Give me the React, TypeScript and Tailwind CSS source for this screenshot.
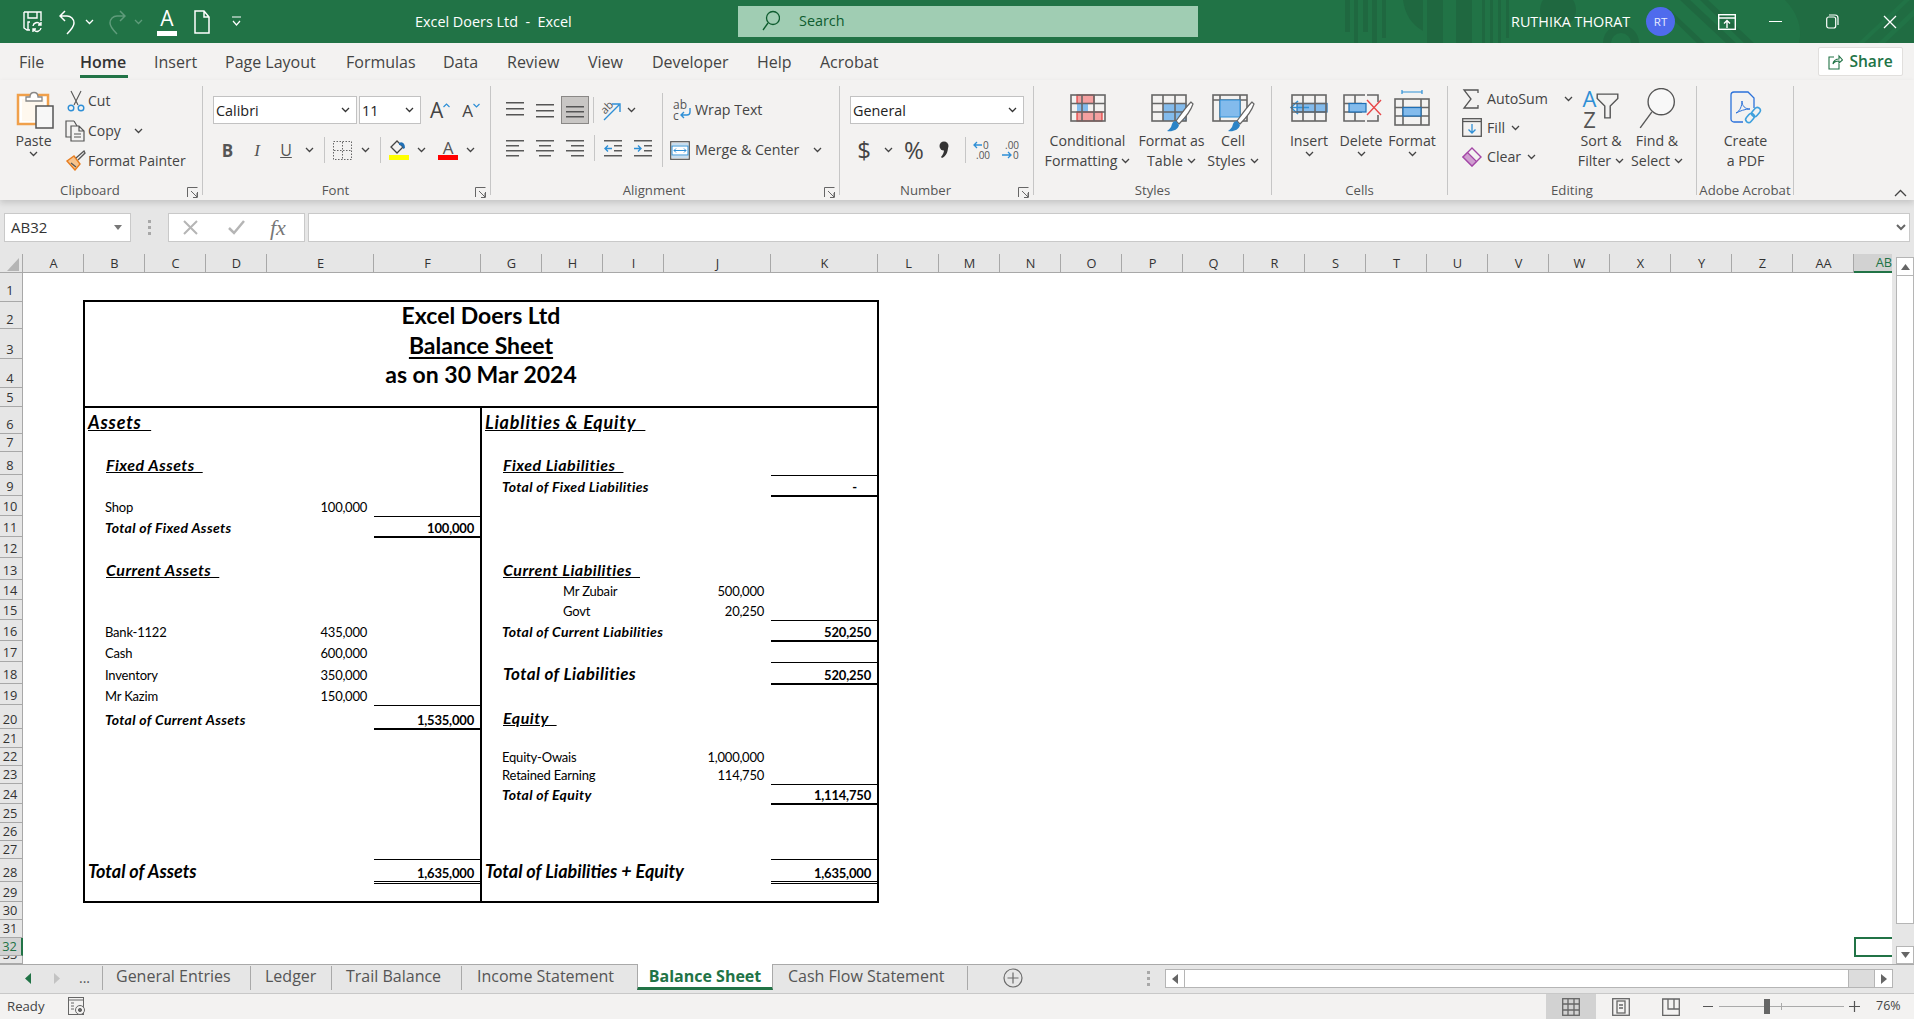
import React from "react";

const ui = "font-['Open_Sans','Noto_Sans',sans-serif]";
const sheetFont = "font-['Lato','Liberation_Sans',sans-serif]";

const Chev = ({ c = "#444" }: { c?: string }) => (
  <svg width="9" height="6" viewBox="0 0 9 6" className="shrink-0"><path d="M1 1l3.5 3.5L8 1" fill="none" stroke={c} strokeWidth="1.3" /></svg>
);
const Launcher = () => (
  <svg width="11" height="11" viewBox="0 0 11 11"><path d="M.5 10V.5H10.5M4 4l6 6M10 6v4.5H6M10.5 5v5.5" fill="none" stroke="#666" strokeWidth="1" /></svg>
);
const Lines = ({ w = [18, 18, 18], y = [1, 7, 13], c = "#555" }: { w?: number[]; y?: number[]; c?: string }) => (
  <svg width="18" height="16" viewBox="0 0 18 16">
    {w.map((x, i) => <rect key={i} x={(18 - x) / 2} y={y[i]} width={x} height="1.5" fill={c} />)}
  </svg>
);
const Grid = ({ children, w = 36, h = 28 }: { children?: React.ReactNode; w?: number; h?: number }) => (
  <svg width={w} height={h + 6} viewBox={`0 0 ${w} ${h + 6}`} className="overflow-visible translate-y-[2px]">
    {children}
    <g fill="none" stroke="#666" strokeWidth="1.6">
      <rect x="1" y="1" width="34" height="26" />
      <path d="M12 1v26M24 1v26M1 9.5h34M1 18h34" />
    </g>
  </svg>
);

function Brush() {
  return (
    <g>
      <path d="M40 8C36 12 30 20 25 27l3 3c6-6 12-14 14-20z" fill="#fff" stroke="#666" strokeWidth="1.2" />
      <path d="M16 37c5 1 11-1 12-6l-3-4c-4 0-4 4-5 6-1 1-2 3-4 4z" fill="#2b83c6" />
    </g>
  );
}

const BigBtn = ({ w, icon, l1, l2, down = false }: { w: string; icon: React.ReactNode; l1: string; l2?: string; down?: boolean }) => (
  <div className={`${w} flex flex-col items-center shrink-0 whitespace-nowrap text-[14.2px] leading-[20px] text-[#444]`}>
    <div className="h-[45px] flex items-center justify-center">{icon}</div>
    <div>{l1}</div>
    <div className="flex items-center gap-[4px]">
      {l2 && <span>{l2}</span>}
      {down && <Chev />}
    </div>
  </div>
);

const Group = ({ w, label, launcher = false, children }: { w: string; label: string; launcher?: boolean; children: React.ReactNode }) => (
  <div className={`${w} h-[109px] mt-[6px] shrink-0 relative flex flex-col border-r border-[#c6c6c6]`}>
    <div className="h-[89px] flex">{children}</div>
    <div className={`h-[20px] translate-y-[5px] text-center text-[13.2px] leading-[20px] text-[#555] whitespace-nowrap ${launcher ? "pr-[22px]" : ""}`}>{label}</div>
    {launcher && <div className="absolute right-[4px] bottom-[-3px]"><Launcher /></div>}
  </div>
);

const Box = ({ w, c, children }: { w: string; c?: string; children: React.ReactNode }) => (
  <div className={`${w} ${c ?? ""} shrink-0 flex items-center justify-center`}>{children}</div>
);

const Select = ({ w, text }: { w: string; text: string }) => (
  <div className={`${w} h-[28px] bg-white border border-[#c2c2c2] flex items-center justify-between pl-[2px] pr-[6px] text-[14.4px] text-[#222]`}>
    <span className="translate-y-[1px]">{text}</span><Chev c="#333" />
  </div>
);

function TitleBar() {
  return (
    <div className="h-[43px] shrink-0 bg-[#217346] relative flex items-center text-white overflow-hidden">
      <svg className="absolute inset-0" width="1914" height="43" viewBox="0 0 1914 43">
        <g fill="#1f6840">
          <rect x="1345" y="0" width="5" height="32" />
          <rect x="1354" y="0" width="4" height="43" />
          <rect x="1363" y="0" width="5" height="32" />
          <rect x="1372" y="0" width="5" height="43" />
          <rect x="1382" y="0" width="4" height="38" />
          <path d="M1403 0c2 14 8 24 20 31V0z" />
          <rect x="1427" y="0" width="16" height="43" />
          <rect x="1456" y="0" width="16" height="43" />
          <rect x="1482" y="0" width="3" height="43" /><rect x="1490" y="0" width="3" height="43" /><rect x="1498" y="0" width="3" height="43" /><rect x="1506" y="0" width="3" height="38" />
          <circle cx="1558" cy="10" r="18" />
          <path d="M1603 43a18 18 0 0 1 36 0h-8a10 10 0 0 0-20 0z" />
          <path d="M1680 0h10l46 43h-10zM1700 0h8l46 43h-10zM1668 8l37 35h-8l-29-28z" />
          <path d="M1785 0c12 12 18 28 14 43h115V0z" opacity=".6" />
          <path d="M1858 43l46-43h6l-46 43zM1878 43l36-34v7l-29 27z" fill="#217346" />
        </g>
      </svg>
      <div className="relative w-[738px] shrink-0 flex items-center pl-[23px]">
        <svg width="20" height="24" viewBox="0 0 20 24" fill="none" stroke="#fff" strokeWidth="1.4"><path d="M1 2h17v9M1 2v16l3 2h3M5 2v6h9V2M7 12H5v8" /><path d="M10 16a4 4 0 0 1 7-2l1 1M18 12v3h-3M18 18a4 4 0 0 1-7 2l-1-1M10 22v-3h3" /></svg>
        <svg className="ml-[16px]" width="17" height="26" viewBox="0 0 17 26" fill="none" stroke="#fff" strokeWidth="1.5"><path d="M6 2L1 7l5 5M1 7h7a7 7 0 0 1 7 7c0 4-3 7-7 11" /></svg>
        <div className="ml-[9px]"><Chev c="#fff" /></div>
        <svg className="ml-[14px]" width="18" height="26" viewBox="0 0 18 26" fill="none" stroke="#5f9c7b" strokeWidth="1.5"><path d="M12 2l5 5-5 5M17 7h-8a7 7 0 0 0-7 7c0 4 3 7 7 11" /></svg>
        <div className="ml-[8px]"><Chev c="#5f9c7b" /></div>
        <div className="ml-[14px] w-[20px] flex flex-col items-center">
          <span className="text-[21px] leading-[22px] font-['Open_Sans']">A</span>
          <div className="w-[20px] h-[5px] bg-white mt-[2px]" />
        </div>
        <svg className="ml-[17px]" width="16" height="24" viewBox="0 0 16 24" fill="none" stroke="#fff" strokeWidth="1.5"><path d="M1 1h9l5 6v16H1zM10 1v6h5" /></svg>
        <svg className="ml-[22px]" width="9" height="11" viewBox="0 0 9 11" fill="none" stroke="#fff" strokeWidth="1.2"><path d="M0 1h9M1 5l3.5 4L8 5" /></svg>
        <span className="ml-[174px] text-[14.4px] whitespace-pre">Excel Doers Ltd  -  Excel</span>
      </div>
      <div className="relative w-[460px] h-[31px] -mt-[1px] bg-[#a0cdb3] flex items-center shrink-0">
        <svg className="ml-[24px]" width="18" height="22" viewBox="0 0 18 22" fill="none" stroke="#0e5c2f" strokeWidth="1.3"><circle cx="11" cy="8" r="6.5" /><path d="M6 13l-5 7" /></svg>
        <span className="ml-[19px] text-[14.4px] text-[#0e5c2f]">Search</span>
      </div>
      <span className="relative ml-[313px] w-[121px] text-[14.4px] whitespace-nowrap shrink-0">RUTHIKA THORAT</span>
      <div className="relative ml-[14px] w-[29px] h-[29px] rounded-full bg-[#4f6bed] flex items-center justify-center text-[11.5px] text-[#e8ecff] shrink-0">RT</div>
      <svg className="relative ml-[43px] shrink-0" width="18" height="16" viewBox="0 0 18 16" fill="none" stroke="#fff" strokeWidth="1.4"><rect x=".7" y=".7" width="16.6" height="14.6" /><path d="M1 4h16M9 14V7M6 9.5L9 6.5l3 3" /></svg>
      <div className="relative ml-[33px] w-[13px] h-[1.5px] bg-white shrink-0" />
      <svg className="relative ml-[44px] shrink-0" width="13" height="15" viewBox="0 0 13 15" fill="none" stroke="#fff" strokeWidth="1.2"><rect x=".7" y="3" width="9" height="11" rx="2" /><path d="M3 1h6a3 3 0 0 1 3 3v7" /></svg>
      <svg className="relative ml-[44px] shrink-0" width="14" height="14" viewBox="0 0 14 14" stroke="#fff" strokeWidth="1.3"><path d="M1 1l12 12M13 1L1 13" /></svg>
    </div>
  );
}

const tabs = [
  ["File", "w-[61px] text-[#444]"], ["Home", "w-[74px] font-semibold text-[#333]"], ["Insert", "w-[71px] text-[#444]"], ["Page Layout", "w-[121px] text-[#444]"],
  ["Formulas", "w-[97px] text-[#444]"], ["Data", "w-[64px] text-[#444]"], ["Review", "w-[81px] text-[#444]"], ["View", "w-[64px] text-[#444]"],
  ["Developer", "w-[105px] text-[#444]"], ["Help", "w-[63px] text-[#444]"], ["Acrobat", "w-[80px] text-[#444]"],
];

function TabRow() {
  return (
    <div className="h-[37px] shrink-0 bg-[#f3f2f1] flex items-center pl-[19px] text-[16px]">
      {tabs.map(([t, c]) => (
        <div key={t} className={`${c} h-full flex items-center relative shrink-0 pt-[1px]`}>
          {t}
          {t === "Home" && <div className="absolute left-0 w-[48px] bottom-[2px] h-[3px] bg-[#217346]" />}
        </div>
      ))}
      <div className="ml-auto mr-[11px] w-[85px] h-[29px] bg-white border border-[#e1dfdd] rounded-[2px] flex items-center justify-center gap-[6px] text-[#217346] font-semibold text-[15.6px]">
        <svg width="15" height="16" viewBox="0 0 15 16" fill="none" stroke="#217346" strokeWidth="1.1"><path d="M6 3H1v12h10v-5M5 10c0-3 3-5 6-5V2l3.5 4L11 9V7c-3 0-5 1-6 3z" /></svg>
        Share
      </div>
    </div>
  );
}

function Ribbon() {
  return (
    <div className="h-[120px] shrink-0 bg-[#f3f2f1] flex relative z-10 shadow-[0_3px_6px_rgba(0,0,0,0.14)]">
      <Group w="w-[203px]" label="Clipboard" launcher>
        <div className="w-[63px] shrink-0 pl-[2px]">
          <BigBtn w="w-[63px]" l1="Paste" down icon={
            <svg className="translate-x-[3px]" width="42" height="40" viewBox="0 0 42 40">
              <rect x="2" y="6" width="30" height="29" fill="#fff" stroke="#f0a04b" strokeWidth="2.5" />
              <rect x="6" y="10" width="22" height="22" fill="#fff8ee" />
              <path d="M10 8h4c0-6 8-6 8 0h4v4H10z" fill="#fff" stroke="#888" strokeWidth="1.3" />
              <rect x="20" y="17" width="17" height="22" fill="#f7f7f7" stroke="#555" strokeWidth="1.5" />
            </svg>} />
        </div>
        <div className="flex flex-col text-[14px] text-[#444]">
          {[
            ["Cut", <svg key="c" width="18" height="22" viewBox="0 0 18 22" fill="none" stroke="#555" strokeWidth="1.1"><path d="M4 1l7 14M14 1L7 15" /><circle cx="4" cy="18" r="2.8" stroke="#2e8fd6" strokeWidth="1.4" /><circle cx="14" cy="18" r="2.8" stroke="#2e8fd6" strokeWidth="1.4" /></svg>],
            ["Copy", <svg key="p" width="21" height="22" viewBox="0 0 21 22" fill="none" stroke="#555" strokeWidth="1.2"><path d="M9 1H1v16h5M9 1l3 5" /><path d="M6 6h8l5 5v10H6zM14 6v5h5M9 14h7M9 17h7" /></svg>],
            ["Format Painter", <svg key="f" width="20" height="21" viewBox="0 0 20 21" fill="none"><path d="M1 11l7-5 6 8-5 6z" fill="#f7c38c" stroke="#e87d1e" strokeWidth="1.4" /><path d="M5 13l5 4M10 8l8-7 1 2-7 7" stroke="#555" strokeWidth="1.3" /></svg>],
          ].map(([t, ic], i) => (
            <div key={i} className="h-[30px] flex items-center whitespace-nowrap">
              <div className="w-[25px] shrink-0 flex justify-center">{ic}</div>
              <span>{t}</span>
              {t === "Copy" && <span className="ml-[13px]"><Chev /></span>}
            </div>
          ))}
        </div>
      </Group>

      <Group w="w-[288px]" label="Font" launcher>
        <div className="flex flex-col pl-[10px] pt-[10px]">
          <div className="flex items-center gap-[2px] h-[28px]">
            <Select w="w-[144px]" text="Calibri" />
            <Select w="w-[62px]" text="11" />
            <div className="flex items-center ml-[7px] text-[#444]">
              <span className="text-[21px] leading-none">A</span>
              <svg className="mb-[10px]" width="7" height="5" viewBox="0 0 7 5" fill="none" stroke="#2e8fd6" strokeWidth="1.2"><path d="M.5 4L3.5 1l3 3" /></svg>
              <span className="text-[17px] leading-none ml-[12px]">A</span>
              <svg className="mb-[10px]" width="7" height="5" viewBox="0 0 7 5" fill="none" stroke="#2e8fd6" strokeWidth="1.2"><path d="M.5 1l3 3 3-3" /></svg>
            </div>
          </div>
          <div className="flex items-center h-[30px] mt-[11px] -ml-[10px] pl-[10px] text-[#555]">
            <Box w="w-[29px]"><span className="font-bold text-[17px] leading-none">B</span></Box>
            <Box w="w-[30px]"><span className="italic text-[17px] leading-none font-['Liberation_Serif']">I</span></Box>
            <Box w="w-[28px]"><span className="underline text-[16px] leading-none">U</span></Box>
            <Box w="w-[18px]"><Chev /></Box>
            <Box w="w-[12px]"><div className="w-px h-[26px] bg-[#c6c6c6]" /></Box>
            <Box w="w-[24px]"><svg width="19" height="19" viewBox="0 0 19 19" fill="none" stroke="#666" strokeDasharray="1.5 1.5"><rect x=".5" y=".5" width="18" height="18" /><path d="M9.5 1v17M1 9.5h17" /></svg></Box>
            <Box w="w-[22px]"><Chev /></Box>
            <Box w="w-[8px]"><div className="w-px h-[26px] bg-[#c6c6c6]" /></Box>
            <Box w="w-[30px]">
              <div className="flex flex-col items-center">
                <svg width="18" height="15" viewBox="0 0 18 15"><path d="M7 1L1 7l6 6 6-6z" fill="none" stroke="#444" strokeWidth="1.3" /><path d="M9 3c3-2 6 0 6 5l-2 1c0-2-1-4-4-4z" fill="#1f6fb5" /></svg>
                <div className="w-[20px] h-[5px] bg-[#ffff00]" />
              </div>
            </Box>
            <Box w="w-[14px]"><Chev /></Box>
            <Box w="w-[40px]">
              <div className="flex flex-col items-center">
                <span className="text-[17px] leading-[15px]">A</span>
                <div className="w-[20px] h-[5px] bg-[#ff0000]" />
              </div>
            </Box>
            <Box w="w-[4px]"><Chev /></Box>
          </div>
        </div>
      </Group>

      <Group w="w-[349px]" label="Alignment" launcher>
        <div className="w-[172px] shrink-0 h-[74px] mt-[7px] border-r border-[#c6c6c6] flex flex-col pl-[9px]">
          <div className="h-[28px] mt-[3px] flex items-center">
            <Box w="w-[30px]"><Lines y={[0, 6, 12]} /></Box>
            <Box w="w-[30px]"><Lines y={[2, 8, 14]} /></Box>
            <div className="w-[28px] h-[28px] bg-[#c8c6c4] border border-[#8a8886] flex items-center justify-center shrink-0 ml-[1px]"><Lines y={[4, 9, 14]} /></div>
            <Box w="w-[8px]"><div className="w-px h-[26px] bg-[#c6c6c6]" /></Box>
            <Box w="w-[26px]">
              <svg width="22" height="22" viewBox="0 0 22 22" fill="none"><path d="M5 21L20 6M13 5h8v8" stroke="#2e8fd6" strokeWidth="1.4" /><text x="2" y="14" fontSize="11" fill="#555" transform="rotate(-45 6 10)">ab</text></svg>
            </Box>
            <Box w="w-[16px]"><Chev /></Box>
          </div>
          <div className="h-[30px] mt-[9px] flex items-center">
            <Box w="w-[30px]"><svg width="18" height="18" viewBox="0 0 18 18" fill="#5a5a5a"><rect y="1" width="18" height="1.5" /><rect y="6" width="13" height="1.5" /><rect y="11" width="18" height="1.5" /><rect y="16" width="13" height="1.5" /></svg></Box>
            <Box w="w-[30px]"><svg width="18" height="18" viewBox="0 0 18 18" fill="#5a5a5a"><rect y="1" width="18" height="1.5" /><rect x="3" y="6" width="12" height="1.5" /><rect y="11" width="18" height="1.5" /><rect x="3" y="16" width="12" height="1.5" /></svg></Box>
            <Box w="w-[30px]"><svg width="18" height="18" viewBox="0 0 18 18" fill="#5a5a5a"><rect y="1" width="18" height="1.5" /><rect x="5" y="6" width="13" height="1.5" /><rect y="11" width="18" height="1.5" /><rect x="5" y="16" width="13" height="1.5" /></svg></Box>
            <Box w="w-[8px]"><div className="w-px h-[26px] bg-[#c6c6c6]" /></Box>
            <Box w="w-[30px]"><svg width="18" height="18" viewBox="0 0 18 18"><path fill="#5a5a5a" d="M0 1h18v1.5H0zM10 6h8v1.5h-8zM10 11h8v1.5h-8zM0 16h18v1.5H0z" /><path d="M8 9.5H1M4 6.5L1 9.5l3 3" fill="none" stroke="#2e8fd6" strokeWidth="1.4" /></svg></Box>
            <Box w="w-[30px]"><svg width="18" height="18" viewBox="0 0 18 18"><path fill="#5a5a5a" d="M0 1h18v1.5H0zM10 6h8v1.5h-8zM10 11h8v1.5h-8zM0 16h18v1.5H0z" /><path d="M0 9.5h7M4 6.5l3 3-3 3" fill="none" stroke="#2e8fd6" strokeWidth="1.4" /></svg></Box>
          </div>
        </div>
        <div className="flex flex-col text-[14.2px] text-[#444] whitespace-nowrap">
          <div className="h-[28px] mt-[10px] flex items-center">
            <div className="w-[32px] pl-[10px] shrink-0"><svg width="20" height="22" viewBox="0 0 20 22"><text x="0" y="10" fontSize="12" fill="#555">ab</text><text x="0" y="21" fontSize="12" fill="#555">c</text><path d="M17 9v4a3 3 0 0 1-3 3H8M11 13l-3 3 3 3" fill="none" stroke="#2e8fd6" strokeWidth="1.4" /></svg></div>
            <span>Wrap Text</span>
          </div>
          <div className="h-[30px] mt-[11px] flex items-center">
            <div className="w-[32px] pl-[7px] shrink-0"><svg width="20" height="19" viewBox="0 0 20 19" fill="none"><rect x=".7" y=".7" width="18.6" height="17.6" stroke="#555" strokeWidth="1.2" /><rect x="2" y="5" width="16" height="9" fill="#fff" stroke="#2e8fd6" /><path d="M4 9.5h12M6 7.5l-2 2 2 2M14 7.5l2 2-2 2" stroke="#2e8fd6" /><path d="M2 3h16M2 16h16" stroke="#9cc9ee" /></svg></div>
            <span className="w-[118px]">Merge &amp; Center</span>
            <Chev />
          </div>
        </div>
      </Group>

      <Group w="w-[194px]" label="Number" launcher>
        <div className="flex flex-col pl-[10px] pt-[10px] text-[#444]">
          <Select w="w-[174px]" text="General" />
          <div className="flex items-center h-[30px] mt-[11px]">
            <Box w="w-[28px]"><span className="text-[24px] leading-none">$</span></Box>
            <Box w="w-[20px]"><Chev /></Box>
            <Box w="w-[32px]"><span className="text-[24px] leading-none">%</span></Box>
            <Box w="w-[24px]" c="ml-[2px]"><svg width="10" height="18" viewBox="0 0 10 18"><circle cx="5" cy="5" r="4.5" fill="#333" /><path d="M9 6c0 5-2 9-6 11l-1-1c2-2 3-5 3-7z" fill="#333" /></svg></Box>
            <Box w="w-[8px]" c="ml-[5px]"><div className="w-px h-[26px] bg-[#c6c6c6]" /></Box>
            <Box w="w-[28px]" c="-ml-[1px]"><svg width="21" height="20" viewBox="0 0 21 20"><text x="11" y="9" fontSize="10" fill="#555">0</text><text x="4" y="19" fontSize="10" fill="#555">.00</text><path d="M10 5H2M5 2L2 5l3 3" fill="none" stroke="#2e8fd6" strokeWidth="1.3" /></svg></Box>
            <Box w="w-[27px]" c="ml-[2px]"><svg width="21" height="20" viewBox="0 0 21 20"><text x="4" y="9" fontSize="10" fill="#555">.00</text><text x="12" y="19" fontSize="10" fill="#555">0</text><path d="M1 15h9M7 12l3 3-3 3" fill="none" stroke="#2e8fd6" strokeWidth="1.3" /></svg></Box>
          </div>
        </div>
      </Group>

      <Group w="w-[238px]" label="Styles">
        <BigBtn w="w-[107px]" l1="Conditional" l2="Formatting" down icon={
          <Grid><rect x="7" y="1" width="17" height="8.5" fill="#f4a0a0" stroke="#e03c3c" strokeWidth="1.2" /><rect x="7" y="9.5" width="11" height="8.5" fill="#83bbec" /><rect x="7" y="18" width="25" height="9" fill="#f4a0a0" stroke="#e03c3c" strokeWidth="1.2" /></Grid>} />
        <BigBtn w="w-[61px]" l1="Format as" l2="Table" down icon={
          <svg width="42" height="40" viewBox="0 0 42 40" className="overflow-visible translate-y-[5px]"><rect x="12" y="9" width="24" height="18" fill="#83bbec" /><g fill="none" stroke="#666" strokeWidth="1.6"><rect x="1" y="1" width="34" height="26" /><path d="M12 1v26M24 1v26M1 9.5h34M1 18h34" /></g><Brush /></svg>} />
        <BigBtn w="w-[62px]" l1="Cell" l2="Styles" down icon={
          <svg width="42" height="40" viewBox="0 0 42 40" className="overflow-visible translate-y-[5px]"><g fill="none" stroke="#666" strokeWidth="1.6"><rect x="1" y="1" width="34" height="26" /><path d="M8 1v26M28 1v26M1 6h34" /></g><rect x="8" y="6" width="20" height="17" fill="#83bbec" stroke="#2e8fd6" /><Brush /></svg>} />
      </Group>

      <Group w="w-[176px]" label="Cells">
        <BigBtn w="w-[74px]" l1="Insert" down icon={
          <Grid><rect x="6" y="9.5" width="30" height="8.5" fill="#83bbec" stroke="#1f6fb5" strokeWidth="1.2" /><path d="M18 13.5H0M7 7L0 13.5 7 20" fill="none" stroke="#2e8fd6" strokeWidth="1.5" /></Grid>} />
        <BigBtn w="w-[30px]" l1="Delete" down icon={
          <svg width="36" height="34" viewBox="0 0 36 34" className="overflow-visible translate-y-[2px]"><g fill="none" stroke="#666" strokeWidth="1.6"><path d="M22 1H1v26h21M12 1v26M24 1h11v7M35 21v6H24M1 9.5h18M1 18h18" /></g><rect x="6" y="9.5" width="17" height="8.5" fill="#83bbec" stroke="#1f6fb5" strokeWidth="1.2" /><path d="M24 6l14 15M38 6L24 21" stroke="#e8484a" strokeWidth="1.4" /></svg>} />
        <BigBtn w="w-[72px]" l1="Format" down icon={
          <svg width="36" height="38" viewBox="0 0 36 38" className="overflow-visible"><path d="M8 -1v4M28 -1v4M8 1h20" transform="translate(0,1)" fill="none" stroke="#2e8fd6" strokeWidth="1.2" /><g transform="translate(0,8)"><g fill="none" stroke="#666" strokeWidth="1.6"><rect x="1" y="1" width="34" height="26" /><path d="M9 1v26M27 1v26M1 9.5h34M1 18h34" /></g><rect x="9" y="9.5" width="18" height="8.5" fill="#83bbec" stroke="#1f6fb5" strokeWidth="1.2" /></g></svg>} />
      </Group>

      <Group w="w-[249px]" label="Editing">
        <div className="w-[125px] shrink-0 flex flex-col -mt-[2px] text-[14.2px] text-[#444] whitespace-nowrap">
          <div className="h-[29px] flex items-center pl-[14px]">
            <div className="w-[25px] shrink-0"><svg width="18" height="20" viewBox="0 0 18 20" fill="none" stroke="#555" strokeWidth="1.3"><path d="M16 4V1H2l7 9-7 9h14v-3" /></svg></div>
            <span className="w-[77px]">AutoSum</span><Chev />
          </div>
          <div className="h-[29px] flex items-center pl-[14px]">
            <div className="w-[25px] shrink-0"><svg width="20" height="19" viewBox="0 0 20 19" fill="none"><rect x=".7" y=".7" width="18.6" height="17.6" stroke="#555" strokeWidth="1.3" /><path d="M1 3.5h18" stroke="#555" strokeWidth="1.3" /><path d="M10 6v9M6.5 11.5l3.5 3.5 3.5-3.5" stroke="#2e8fd6" strokeWidth="1.3" /></svg></div>
            <span className="mr-[6px]">Fill</span><Chev />
          </div>
          <div className="h-[29px] flex items-center pl-[14px]">
            <div className="w-[25px] shrink-0"><svg width="20" height="20" viewBox="0 0 20 20" fill="none"><path d="M10 1l9 9-9 9-9-9z" stroke="#a346a6" strokeWidth="1.4" /><path d="M5.5 5.5l9 9-4.5 4.5-9-9z" fill="#cf9ed0" stroke="#a346a6" strokeWidth="1.2" /></svg></div>
            <span className="mr-[6px]">Clear</span><Chev />
          </div>
        </div>
        <BigBtn w="w-[56px]" l1="Sort &" l2="Filter" down icon={
          <div className="flex items-center text-[#555]">
            <div className="flex flex-col items-center text-[22px] leading-[21px]"><span className="text-[#2e8fd6]">A</span><span>Z</span></div>
            <svg className="-mt-[6px]" width="23" height="26" viewBox="0 0 21 24" fill="none" stroke="#555" strokeWidth="1.3"><path d="M1 1h19v4l-7 7v11H8V12L1 5z" /></svg>
          </div>} />
        <BigBtn w="w-[56px]" l1="Find &" l2="Select" down icon={
          <svg width="38" height="42" viewBox="0 0 36 40" fill="#f8f8f8" stroke="#555" strokeWidth="1.3"><circle cx="22" cy="13" r="12.5" /><path d="M13 23L2 38" /></svg>} />
      </Group>

      <Group w="w-[97px]" label="Adobe Acrobat">
        <BigBtn w="w-[97px]" l1="Create" l2="a PDF" icon={
          <svg width="33" height="36" viewBox="0 0 33 36" fill="none" stroke="#2c72da" strokeWidth="1.3"><path d="M14 31H5a3 3 0 0 1-3-3V4a3 3 0 0 1 3-3h14l6 6v10" /><path d="M7 22c4-2 6-7 6-12 0 5 3 8 8 8-5 0-10 2-14 4z" strokeWidth="1" /><rect x="16" y="24" width="10" height="6" rx="3" transform="rotate(-50 21 27)" stroke="#3ea0dd" strokeWidth="1.6" /><rect x="22" y="18" width="10" height="6" rx="3" transform="rotate(-50 27 21)" stroke="#3ea0dd" strokeWidth="1.6" /></svg>} />
      </Group>
      <svg className="absolute right-[7px] bottom-[3px]" width="13" height="8" viewBox="0 0 13 8" fill="none" stroke="#444" strokeWidth="1.3"><path d="M1 7l5.5-5.5L12 7" /></svg>
    </div>
  );
}

function FormulaBar() {
  return (
    <div className="h-[54px] shrink-0 bg-[#e6e6e6] flex pt-[13px] pb-[12px] pl-[4px] items-stretch">
      <div className="w-[127px] bg-white border border-[#c9c9c9] flex items-center justify-between pl-[6px] pr-[8px] text-[15px] text-[#333]">
        <span>AB32</span>
        <svg width="8" height="5" viewBox="0 0 8 5"><path d="M0 0h8L4 5z" fill="#777" /></svg>
      </div>
      <div className="w-[37px] flex flex-col items-center justify-center gap-[3px]">
        <i className="w-[3px] h-[3px] bg-[#a8a8a8]" /><i className="w-[3px] h-[3px] bg-[#a8a8a8]" /><i className="w-[3px] h-[3px] bg-[#a8a8a8]" />
      </div>
      <div className="w-[137px] bg-white border border-[#c9c9c9] flex items-center text-[#aaa]">
        <svg className="ml-[14px]" width="15" height="15" viewBox="0 0 15 15" stroke="#b5b5b5" strokeWidth="2"><path d="M1 1l13 13M14 1L1 14" /></svg>
        <svg className="ml-[30px]" width="17" height="15" viewBox="0 0 17 15" fill="none" stroke="#b5b5b5" strokeWidth="2.5"><path d="M1 8l5 5L16 1" /></svg>
        <span className="ml-[25px] italic text-[#777] text-[22px] leading-none font-['Liberation_Serif']">fx</span>
      </div>
      <div className="ml-[3px] w-[1602px] bg-white border border-[#c9c9c9] flex items-center justify-end pr-[3px]">
        <svg width="10" height="7" viewBox="0 0 10 7" fill="none" stroke="#666" strokeWidth="2"><path d="M1 1l4 4 4-4" /></svg>
      </div>
    </div>
  );
}

const colNames = ["A", "B", "C", "D", "E", "F", "G", "H", "I", "J", "K", "L", "M", "N", "O", "P", "Q", "R", "S", "T", "U", "V", "W", "X", "Y", "Z", "AA", "AB"];
const rowCount = 33;

const C = ({ at, cn = "", children }: { at: string; cn?: string; children?: React.ReactNode }) => (
  <div className={`${at} ${cn} flex items-end whitespace-pre leading-[18px] text-black overflow-visible min-w-0`}>{children}</div>
);
const big = "font-bold italic text-[18px] leading-[22px] pl-[4px]";
const h1 = "font-bold italic text-[18px] leading-[22px] pl-[4px] tracking-[0.8px] pb-[1px]";
const head = "font-bold italic text-[16px] pl-[22px] tracking-[0.5px] pb-[1px]";
const tot = "font-bold italic text-[14px] pl-[21px] tracking-[0.35px]";
const totBig = "font-bold italic text-[17px] pl-[22px] tracking-[0.4px] pb-[1px]";
const reg = "text-[13px] pl-[21px] tracking-[-0.2px]";
const deep = "text-[13px] pl-[82px] tracking-[-0.2px]";
const num = "text-[13px] justify-end pr-[7px] tracking-[-0.25px]";
const bnum = "text-[13px] font-bold justify-end pr-[7px] tracking-[-0.2px]";
const title = "font-bold text-[23px] leading-[28px] justify-center";
const thin = "border-b border-black -mb-[1px]";
const thick = "border-b-2 border-black -mb-[1px]";
const dbl = "border-b-[3px] border-double border-black -mb-[2px]";

function Sheet() {
  return (
    <div className={`w-[1892px] shrink-0 h-full bg-white overflow-hidden grid grid-cols-[23px_repeat(4,61px)_107px_107px_repeat(3,61px)_107px_107px_repeat(16,61px)_38px] grid-rows-[19px_29px_27px_30px_29px_19px_27px_18px_23px_21px_20px_21px_21px_22px_20px_20px_21px_21px_22px_21px_24px_19px_18px_18px_20px_19px_18px_18px_23px_20px_18px_18px_18px_8px] ${sheetFont}`}>
      <div className="col-start-1 row-start-1 bg-[#e6e6e6] border-r border-b border-[#a8a8a8] flex items-end justify-end pr-[3px] pb-[1px]">
        <svg width="12" height="13" viewBox="0 0 12 13"><path d="M12 0v13H0z" fill="#b5b5b5" /></svg>
      </div>
      {colNames.map((n, i) => (
        <div key={n} style={{ gridColumn: i + 2, gridRow: 1 }} className={`${ui} text-[12.8px] flex items-center pt-[1px] border-b ${n === "AB" ? "bg-[#d2d2d2] text-[#217346] border-b-2 border-[#217346] justify-end" : "bg-[#e6e6e6] text-[#333] border-r border-[#a8a8a8] justify-center pl-[1px]"} overflow-hidden`}>{n}</div>
      ))}
      {Array.from({ length: rowCount }, (_, i) => (
        <div key={i} style={{ gridColumn: 1, gridRow: i + 2 }} className={`${ui} text-[12.8px] leading-[18px] flex items-end justify-center pr-[2px] overflow-hidden ${i === 0 ? "pb-[2px] " : ""}${i === 31 ? "bg-[#d2d2d2] text-[#217346] border-r-2 border-[#217346] border-b border-b-[#a8a8a8]" : "bg-[#e6e6e6] text-[#333] border-r border-b border-[#a8a8a8]"}`}>{i + 1}</div>
      ))}

      <C at="col-start-3 col-end-13 row-start-3" cn={title}>Excel Doers Ltd</C>
      <C at="col-start-3 col-end-13 row-start-4" cn={title}><span className="underline underline-offset-[3px] decoration-[2px]">Balance Sheet</span></C>
      <C at="col-start-3 col-end-13 row-start-5" cn={title}>as on 30 Mar 2024</C>

      <C at="col-start-3 col-end-13 row-start-6" cn={thick} />
      <C at="col-start-8 row-start-7 row-end-31" cn="border-l-2 border-black -ml-[1px]" />
      <C at="col-start-3 col-end-13 row-start-3 row-end-31" cn="border-2 border-black -ml-[1px] -mt-[2px] -mr-[1px] -mb-[1px] pointer-events-none" />

      <C at="col-start-3 col-end-8 row-start-7" cn={h1}><span className="underline">Assets  </span></C>
      <C at="col-start-3 col-end-8 row-start-9" cn={head}><span className="underline">Fixed Assets  </span></C>
      <C at="col-start-3 col-end-6 row-start-11" cn={reg}>Shop</C>
      <C at="col-start-6 row-start-11" cn={num}>100,000</C>
      <C at="col-start-7 row-start-11" cn={thin} />
      <C at="col-start-3 col-end-6 row-start-12" cn={tot}>Total of Fixed Assets</C>
      <C at="col-start-7 row-start-12" cn={bnum}>100,000</C>
      <C at="col-start-7 row-start-12" cn={thick} />
      <C at="col-start-3 col-end-8 row-start-14" cn={head}><span className="underline">Current Assets  </span></C>
      <C at="col-start-3 col-end-6 row-start-17" cn={reg}>Bank-1122</C>
      <C at="col-start-6 row-start-17" cn={num}>435,000</C>
      <C at="col-start-3 col-end-6 row-start-18" cn={reg}>Cash</C>
      <C at="col-start-6 row-start-18" cn={num}>600,000</C>
      <C at="col-start-3 col-end-6 row-start-19" cn={reg}>Inventory</C>
      <C at="col-start-6 row-start-19" cn={num}>350,000</C>
      <C at="col-start-3 col-end-6 row-start-20" cn={reg}>Mr Kazim</C>
      <C at="col-start-6 row-start-20" cn={num}>150,000</C>
      <C at="col-start-7 row-start-20" cn={thin} />
      <C at="col-start-3 col-end-6 row-start-21" cn={tot}>Total of Current Assets</C>
      <C at="col-start-7 row-start-21" cn={bnum}>1,535,000</C>
      <C at="col-start-7 row-start-21" cn={thick} />
      <C at="col-start-7 row-start-28" cn={thin} />
      <C at="col-start-3 col-end-7 row-start-29" cn={big}>Total of Assets</C>
      <C at="col-start-7 row-start-29" cn={bnum}>1,635,000</C>
      <C at="col-start-7 row-start-29" cn={dbl} />

      <C at="col-start-8 col-end-13 row-start-7" cn={h1}><span className="underline">Liablities &amp; Equity  </span></C>
      <C at="col-start-8 col-end-12 row-start-9" cn={head}><span className="underline">Fixed Liabilities  </span></C>
      <C at="col-start-12 row-start-9" cn={thin} />
      <C at="col-start-8 col-end-12 row-start-10" cn={tot}>Total of Fixed Liabilities</C>
      <C at="col-start-12 row-start-10" cn={`${bnum} pr-[21px]`}>-</C>
      <C at="col-start-12 row-start-10" cn={thick} />
      <C at="col-start-8 col-end-12 row-start-14" cn={head}><span className="underline">Current Liabilities  </span></C>
      <C at="col-start-8 col-end-11 row-start-15" cn={deep}>Mr Zubair</C>
      <C at="col-start-11 row-start-15" cn={num}>500,000</C>
      <C at="col-start-8 col-end-11 row-start-16" cn={deep}>Govt</C>
      <C at="col-start-11 row-start-16" cn={num}>20,250</C>
      <C at="col-start-12 row-start-16" cn={thin} />
      <C at="col-start-8 col-end-12 row-start-17" cn={tot}>Total of Current Liabilities</C>
      <C at="col-start-12 row-start-17" cn={bnum}>520,250</C>
      <C at="col-start-12 row-start-17" cn={thick} />
      <C at="col-start-12 row-start-18" cn={thin} />
      <C at="col-start-8 col-end-12 row-start-19" cn={totBig}>Total of Liabilities</C>
      <C at="col-start-12 row-start-19" cn={bnum}>520,250</C>
      <C at="col-start-12 row-start-19" cn={thick} />
      <C at="col-start-8 col-end-12 row-start-21" cn={`${head} leading-[20px]`}><span className="underline">Equity  </span></C>
      <C at="col-start-8 col-end-11 row-start-23" cn={reg}>Equity-Owais</C>
      <C at="col-start-11 row-start-23" cn={num}>1,000,000</C>
      <C at="col-start-8 col-end-11 row-start-24" cn={reg}>Retained Earning</C>
      <C at="col-start-11 row-start-24" cn={num}>114,750</C>
      <C at="col-start-12 row-start-24" cn={thin} />
      <C at="col-start-8 col-end-12 row-start-25" cn={tot}>Total of Equity</C>
      <C at="col-start-12 row-start-25" cn={bnum}>1,114,750</C>
      <C at="col-start-12 row-start-25" cn={thick} />
      <C at="col-start-12 row-start-28" cn={thin} />
      <C at="col-start-8 col-end-12 row-start-29" cn={big}>Total of Liabilities + Equity</C>
      <C at="col-start-12 row-start-29" cn={bnum}>1,635,000</C>
      <C at="col-start-12 row-start-29" cn={dbl} />

      <C at="col-start-29 row-start-33" cn="border-2 border-r-0 border-[#217346] -mt-[1px] -mb-[1px]" />
    </div>
  );
}

function VScroll() {
  return (
    <div className="w-[22px] h-full shrink-0 bg-[#e6e6e6] pl-[4px] flex flex-col pt-[3px]">
      <div className="h-[19px] bg-white border border-[#b5b5b5] flex items-center justify-center"><svg width="9" height="6" viewBox="0 0 9 6"><path d="M4.5 0L9 6H0z" fill="#666" /></svg></div>
      <div className="h-[648px] bg-white border-x border-b border-[#b5b5b5]" />
      <div className="flex-1" />
      <div className="h-[18px] bg-white border border-[#b5b5b5] flex items-center justify-center"><svg width="9" height="6" viewBox="0 0 9 6"><path d="M4.5 6L9 0H0z" fill="#666" /></svg></div>
    </div>
  );
}

const sheetTabs = [
  ["General Entries", "w-[148px] pl-[13px]"],
  ["Ledger", "w-[81px] pl-[14px]"],
  ["Trail Balance", "w-[130px] pl-[14px]"],
  ["Income Statement", "w-[176px] pl-[15px]"],
];

function SheetTabs() {
  return (
    <div className={`h-[29px] shrink-0 bg-[#e6e6e6] border-t border-[#a9a9a9] flex items-start text-[16px] ${ui}`}>
      <div className="w-[102px] shrink-0 h-[26px] flex items-center pl-[25px] text-[#666]">
        <svg width="6" height="11" viewBox="0 0 6 11"><path d="M6 0v11L0 5.5z" fill="#217346" /></svg>
        <svg className="ml-[23px]" width="6" height="11" viewBox="0 0 6 11"><path d="M0 0v11l6-5.5z" fill="#c3c3c3" /></svg>
        <span className="ml-[19px] text-[14px] leading-none text-[#555]">...</span>
      </div>
      {sheetTabs.map(([t, c]) => (
        <div key={t} className={`${c} h-[24px] mt-[1px] pb-[4px] shrink-0 border-l border-[#a9a9a9] flex items-center text-[#555] whitespace-nowrap`}>{t}</div>
      ))}
      <div className="w-[136px] h-[26px] -mt-px bg-white border-x border-[#a9a9a9] border-b-[3px] border-b-[#217346] shrink-0 flex items-center justify-center text-[#217346] font-bold whitespace-nowrap">Balance Sheet</div>
      <div className="w-[195px] h-[24px] mt-[1px] pb-[4px] shrink-0 pl-[15px] border-r border-[#a9a9a9] flex items-center text-[#555] whitespace-nowrap">Cash Flow Statement</div>
      <div className="w-[90px] shrink-0 h-[26px] flex items-center justify-center">
        <svg width="20" height="20" viewBox="0 0 20 20" fill="none" stroke="#6b6b6b" strokeWidth="1.2"><circle cx="10" cy="10" r="9" /><path d="M10 4.5v11M4.5 10h11" /></svg>
      </div>
      <div className="w-[98px] shrink-0 h-[26px] flex flex-col items-end pr-[6px] justify-center gap-[3px]">
        <i className="w-[3px] h-[3px] bg-[#a8a8a8]" /><i className="w-[3px] h-[3px] bg-[#a8a8a8]" /><i className="w-[3px] h-[3px] bg-[#a8a8a8]" />
      </div>
      <div className="ml-[9px] mt-[4px] w-[728px] h-[19px] border border-[#b5b5b5] flex shrink-0">
        <div className="w-[19px] bg-white border-r border-[#b5b5b5] flex items-center justify-center"><svg width="6" height="10" viewBox="0 0 6 10"><path d="M6 0v10L0 5z" fill="#666" /></svg></div>
        <div className="w-[664px] bg-white border-r border-[#b5b5b5]" />
        <div className="flex-1 bg-[#dcdcdc]" />
        <div className="w-[18px] bg-white border-l border-[#b5b5b5] flex items-center justify-center"><svg width="6" height="10" viewBox="0 0 6 10"><path d="M0 0v10l6-5z" fill="#666" /></svg></div>
      </div>
    </div>
  );
}

function StatusBar() {
  return (
    <div className="h-[26px] shrink-0 bg-[#f3f2f1] border-t border-[#c8c8c8] flex items-center text-[13.2px] text-[#444]">
      <span className="ml-[7px] w-[61px]">Ready</span>
      <svg width="18" height="19" viewBox="0 0 18 19" fill="none" stroke="#666"><rect x=".5" y=".5" width="15" height="17" /><path d="M1 3h14" /><circle cx="12" cy="13" r="4.5" fill="#f3f2f1" /><circle cx="12" cy="13" r="1.6" fill="#666" /><path d="M3 6h3M3 9h3M3 12h3" /></svg>
      <div className="ml-auto w-[50px] h-[25px] bg-[#d2d2d2] flex items-center justify-center">
        <svg width="18" height="18" viewBox="0 0 18 18" fill="none" stroke="#666" strokeWidth="1.3"><rect x=".7" y=".7" width="16.6" height="16.6" /><path d="M6 1v16M12 1v16M1 6h16M1 12h16" /></svg>
      </div>
      <svg className="ml-[16px]" width="18" height="18" viewBox="0 0 18 18" fill="none" stroke="#666" strokeWidth="1.3"><rect x=".7" y=".7" width="16.6" height="16.6" /><rect x="5" y="3" width="8" height="12" /><path d="M7 7h4M7 10h4" /></svg>
      <svg className="ml-[32px]" width="18" height="18" viewBox="0 0 18 18" fill="none" stroke="#666" strokeWidth="1.3"><path d="M.7 1v16.3h16.6V1zM6 1v10h11M12 1v10" /></svg>
      <div className="ml-[23px] w-[10px] h-[1.5px] bg-[#555]" />
      <div className="ml-[6px] w-[125px] h-[1px] bg-[#aaa] relative">
        <div className="absolute left-[45px] -top-[7px] w-[6px] h-[15px] bg-[#666]" />
        <div className="absolute left-[62px] -top-[3px] w-[1px] h-[7px] bg-[#aaa]" />
      </div>
      <svg className="ml-[5px]" width="11" height="11" viewBox="0 0 11 11" stroke="#555" strokeWidth="1.2"><path d="M5.5 0v11M0 5.5h11" /></svg>
      <span className="ml-[16px] mr-[12px] w-[26px] text-[12.5px] whitespace-nowrap">76%</span>
    </div>
  );
}

export default function App() {
  return (
    <div className={`w-[1914px] h-[1019px] overflow-hidden flex flex-col bg-[#e6e6e6] ${ui}`}>
      <TitleBar />
      <TabRow />
      <Ribbon />
      <FormulaBar />
      <div className="h-[710px] shrink-0 flex">
        <Sheet />
        <VScroll />
      </div>
      <SheetTabs />
      <StatusBar />
    </div>
  );
}
